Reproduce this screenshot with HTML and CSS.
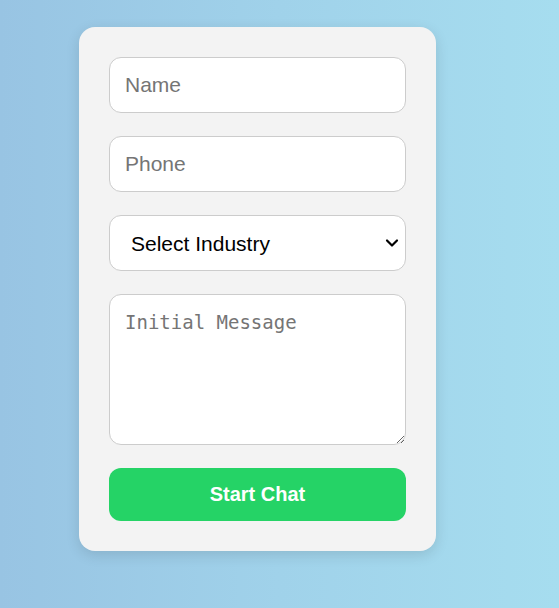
FILE: index.html
```html
<!DOCTYPE html>
<html lang="en">
<head>
<meta charset="utf-8">
<title>Start Chat</title>
<link rel="stylesheet" href="styles.css">
</head>
<body>
<div class="page">
  <form class="card">
    <input class="field" type="text" placeholder="Name">
    <input class="field" type="tel" placeholder="Phone">
    <div class="select-wrap">
      <select class="field select">
        <option>Select Industry</option>
      </select>
      <svg class="chevron" width="14" height="10" viewBox="0 0 14 10" aria-hidden="true">
        <path d="M2 2.5 L7 7.5 L12 2.5" fill="none" stroke="#000" stroke-width="2.2" stroke-linecap="round" stroke-linejoin="round"/>
      </svg>
    </div>
    <textarea class="field message" placeholder="Initial Message"></textarea>
    <button class="btn" type="button">Start Chat</button>
  </form>
</div>
</body>
</html>
```
FILE: styles.css
```css
html, body {
  margin: 0;
  height: 100%;
}
body {
  background: linear-gradient(90deg, #98c4e3 0%, #a0d2ea 50%, #a6ddef 100%);
  font-family: "Liberation Sans", Arial, sans-serif;
}
.page {
  padding: 27px 0 0 79px;
}
.card {
  width: 357px;
  box-sizing: border-box;
  padding: 30px;
  background: #f3f3f3;
  border-radius: 16px;
  box-shadow: 0 4px 14px rgba(0, 0, 0, 0.12);
  display: flex;
  flex-direction: column;
  gap: 23px;
}
.field {
  display: block;
  width: 100%;
  box-sizing: border-box;
  height: 56px;
  margin: 0;
  padding: 15px;
  font-family: "Liberation Sans", Arial, sans-serif;
  font-size: 21px;
  color: #000;
  background: #fff;
  border: 1px solid #cccccc;
  border-radius: 12px;
  outline: none;
}
.field::placeholder {
  color: #757575;
}
.select-wrap {
  position: relative;
}
.select {
  -webkit-appearance: none;
  appearance: none;
  padding: 0 40px 0 21px;
}
.chevron {
  position: absolute;
  right: 7px;
  top: 23px;
  pointer-events: none;
}
.message {
  height: 151px;
  padding-top: 16px;
  font-family: "DejaVu Sans Mono", "Liberation Mono", monospace;
  font-size: 19px;
  resize: vertical;
}
.btn {
  height: 53px;
  border: none;
  border-radius: 12px;
  background: #25d366;
  color: #fff;
  font-family: "Liberation Sans", Arial, sans-serif;
  font-size: 20px;
  font-weight: bold;
  cursor: pointer;
}
```
